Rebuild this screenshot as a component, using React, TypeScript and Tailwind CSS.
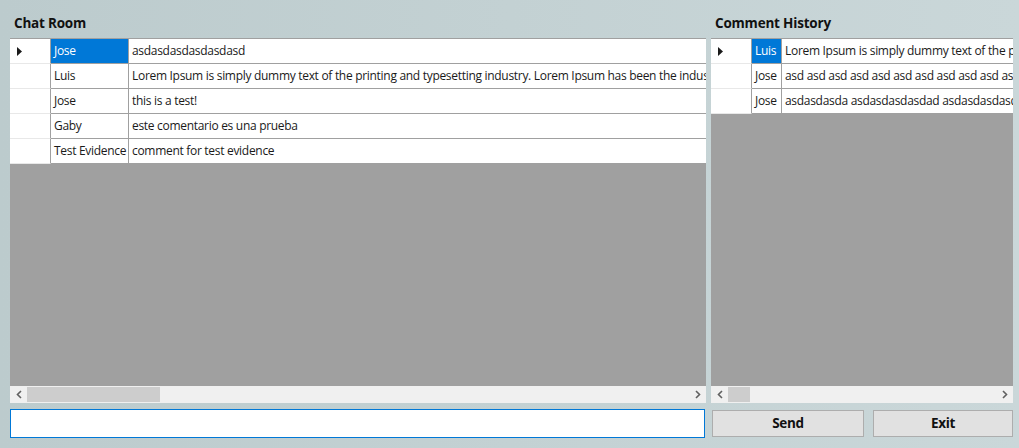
import { ReactNode } from 'react'

interface Row {
  name: string
  text: string
}

const chatRows: Row[] = [
  { name: 'Jose', text: 'asdasdasdasdasdasd' },
  {
    name: 'Luis',
    text: 'Lorem Ipsum is simply dummy text of the printing and typesetting industry. Lorem Ipsum has been the industry\u2019s standard dummy text ever since the 1500s',
  },
  { name: 'Jose', text: 'this is a test!' },
  { name: 'Gaby', text: 'este comentario es una prueba' },
  { name: 'Test Evidence', text: 'comment for test evidence' },
]

const historyRows: Row[] = [
  { name: 'Luis', text: 'Lorem Ipsum is simply dummy text of the printing and typesetting industry.' },
  { name: 'Jose', text: 'asd asd asd asd asd asd asd asd asd asd asd asd asd' },
  { name: 'Jose', text: 'asdasdasda asdasdasdasdad asdasdasdasd' },
]

function Arrow() {
  return (
    <svg width="5" height="9" viewBox="0 0 5 9">
      <path d="M0 0 L5 4.5 L0 9 Z" fill="#1a1a1a" />
    </svg>
  )
}

function Chevron({ dir }: { dir: 'left' | 'right' }) {
  return (
    <svg width="6" height="9" viewBox="0 0 6 9">
      <path
        d={dir === 'left' ? 'M5 1 L1.5 4.5 L5 8' : 'M1 1 L4.5 4.5 L1 8'}
        fill="none"
        stroke="#606060"
        strokeWidth="1.6"
      />
    </svg>
  )
}

function ScrollBar({ thumbWidth }: { thumbWidth: string }) {
  return (
    <div className="h-[17px] bg-[#f0f0f0] flex items-center">
      <div className="w-[17px] h-full flex items-center justify-center">
        <Chevron dir="left" />
      </div>
      <div className="flex-1 h-full py-[1px]">
        <div className={`h-full bg-[#cdcdcd] ${thumbWidth}`} />
      </div>
      <div className="w-[17px] h-full flex items-center justify-center">
        <Chevron dir="right" />
      </div>
    </div>
  )
}

function Grid({
  rows,
  nameWidth,
  scroll,
}: {
  rows: Row[]
  nameWidth: string
  scroll: ReactNode
}) {
  return (
    <div className="flex-1 flex flex-col bg-[#a0a0a0] border-t border-[#a0a0a0] overflow-hidden">
      <div className="flex-1">
        {rows.map((row, i) => (
          <div key={i} className="flex h-[25px] bg-white">
            <div className="w-[41px] shrink-0 border-r border-b border-r-[#a0a0a0] border-b-[#e8e8e8] flex items-center pl-[7px]">
              {i === 0 && <Arrow />}
            </div>
            <div
              className={`${nameWidth} shrink-0 border-r border-b border-[#a0a0a0] flex items-center px-[3px] whitespace-nowrap overflow-hidden ${
                i === 0 ? 'bg-[#0078d7] text-white' : 'text-[#1a1a1a]'
              }`}
            >
              {row.name}
            </div>
            <div className="flex-1 min-w-0 border-b border-[#a0a0a0] flex items-center pl-[3px] whitespace-nowrap overflow-hidden text-[#1a1a1a]">
              {row.text}
            </div>
          </div>
        ))}
      </div>
      {scroll}
    </div>
  )
}

export default function App() {
  return (
    <div
      className="w-[1019px] h-[448px] overflow-hidden flex gap-[5px] pl-[10px] pr-[6px] text-[12px] tracking-[-0.3px] bg-gradient-to-r from-[#bccbcd] via-[#c3d1d3] to-[#cad7d9]"
      style={{ fontFamily: '"Open Sans", "Noto Sans", sans-serif' }}
    >
      {/* Chat room */}
      <div className="w-[696px] flex flex-col">
        <div className="h-[38px] flex items-end pb-[5px] pl-[4px] text-[13.5px] font-bold tracking-[-0.2px] text-[#111]">
          Chat Room
        </div>
        <Grid rows={chatRows} nameWidth="w-[78px]" scroll={<ScrollBar thumbWidth="w-[133px]" />} />
        <div className="h-[45px] pt-[6px] pb-[10px] pr-[1px]">
          <input
            className="w-full h-full bg-white border border-[#0078d7] outline-none px-1"
            defaultValue=""
          />
        </div>
      </div>

      {/* Comment history */}
      <div className="w-[302px] flex flex-col">
        <div className="h-[38px] flex items-end pb-[5px] pl-[4px] text-[13.5px] font-bold tracking-[-0.2px] text-[#111]">
          Comment History
        </div>
        <Grid rows={historyRows} nameWidth="w-[30px]" scroll={<ScrollBar thumbWidth="w-[22px]" />} />
        <div className="h-[45px] pt-[7px] pb-[11px] flex gap-[9px] pl-[1px]">
          <button className="w-[152px] h-full bg-[#e1e1e1] border border-[#adadad] text-[13.5px] font-bold text-[#111]">
            Send
          </button>
          <button className="flex-1 h-full bg-[#e1e1e1] border border-[#adadad] text-[13.5px] font-bold text-[#111]">
            Exit
          </button>
        </div>
      </div>
    </div>
  )
}
